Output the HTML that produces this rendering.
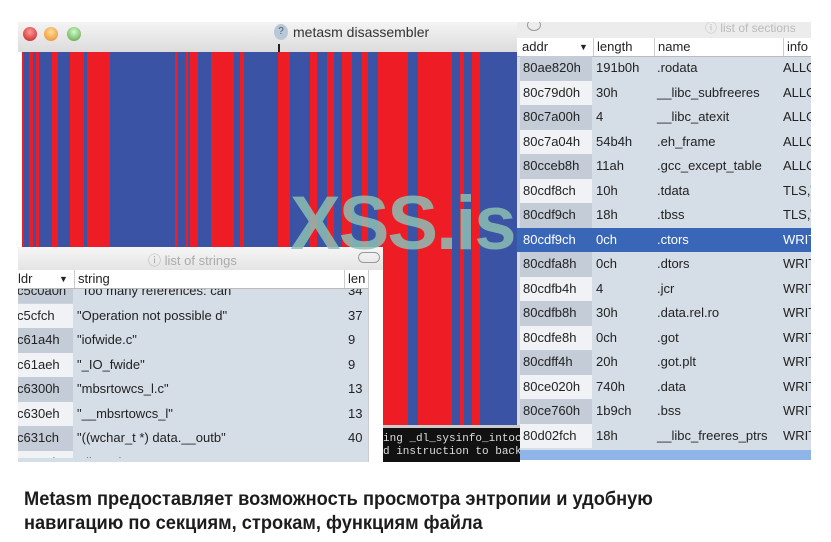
<!DOCTYPE html>
<html><head><meta charset="utf-8"><style>
*{margin:0;padding:0;box-sizing:border-box}
body{width:831px;height:542px;background:#fff;position:relative;overflow:hidden;font-family:"Liberation Sans","DejaVu Sans",sans-serif}
.abs{position:absolute}
#mtitle{left:18px;top:22px;width:502px;height:30px;background:linear-gradient(#f4f4f4,#dcdcdc);}
.dot{position:absolute;top:27px;width:14px;height:14px;border-radius:50%}
#ent{left:22px;top:52px;width:498px;height:410px;
background:linear-gradient(90deg,
#ee1c25 0,#ee1c25 2px,#3a53a4 2px,#3a53a4 7px,#ee1c25 7px,#ee1c25 11px,#3a53a4 11px,#3a53a4 14px,#ee1c25 14px,#ee1c25 17px,#3a53a4 17px,#3a53a4 30px,#ee1c25 30px,#ee1c25 36px,#3a53a4 36px,#3a53a4 48px,
#ee1c25 48px,#ee1c25 62px,#3a53a4 62px,#3a53a4 65px,#ee1c25 65px,#ee1c25 88px,#3a53a4 88px,#3a53a4 153px,
#ee1c25 153px,#ee1c25 156px,#3a53a4 156px,#3a53a4 164px,#ee1c25 164px,#ee1c25 166px,#3a53a4 166px,#3a53a4 168px,#ee1c25 168px,#ee1c25 176px,#3a53a4 176px,#3a53a4 189px,
#ee1c25 189px,#ee1c25 212px,#3a53a4 212px,#3a53a4 218px,#ee1c25 218px,#ee1c25 222px,#3a53a4 222px,#3a53a4 256px,
#ee1c25 256px,#ee1c25 268px,#3a53a4 268px,#3a53a4 288px,#ee1c25 288px,#ee1c25 295px,#3a53a4 295px,#3a53a4 305px,#ee1c25 305px,#ee1c25 312px,#3a53a4 312px,#3a53a4 320px,
#ee1c25 320px,#ee1c25 330px,#3a53a4 330px,#3a53a4 340px,#ee1c25 340px,#ee1c25 346px,#3a53a4 346px,#3a53a4 356px,
#ee1c25 356px,#ee1c25 386px,#3a53a4 386px,#3a53a4 396px,#ee1c25 396px,#ee1c25 430px,#3a53a4 430px,#3a53a4 438px,#ee1c25 438px,#ee1c25 442px,#3a53a4 442px,#3a53a4 450px,#ee1c25 450px,#ee1c25 458px,#3a53a4 458px,#3a53a4 498px)}
#wm{left:290px;top:186px;font-size:76px;font-weight:bold;color:rgba(140,190,180,0.85);letter-spacing:-2px;line-height:1}
#sec{left:517px;top:22px;width:294px;height:438px;background:#d5dde6}
#sectitle{left:517px;top:22px;width:294px;height:16px;background:#ececec;color:#bbb;font-size:12px;overflow:hidden}
.hdr{background:#fff;border-bottom:1px solid #bbb;font-size:13px;color:#222;height:19px;line-height:18px}
.row{position:absolute;height:24.5px;line-height:24.5px;font-size:13px;color:#222;white-space:nowrap}
.row span{position:absolute;top:0}
.sel{background:#3a66b8;color:#fff}
#str{left:18px;top:247px;width:365px;height:215px;background:#d5dde6}
#term{left:383px;top:425px;width:137px;height:37px;background:#111;color:#ddd;font-family:"Liberation Mono",monospace;font-size:11px;line-height:13px;padding-top:5px;border-top:3px solid #ccc;white-space:nowrap;overflow:hidden}
#cap{left:24px;top:488px;font-size:19px;font-weight:bold;color:#1c1c1c;line-height:24px;transform:scaleX(0.96);transform-origin:0 0;white-space:nowrap}
</style></head><body>
<div id="mtitle" class="abs"></div>
<div class="dot" style="left:23px;background:radial-gradient(circle at 50% 35%,#f99,#c21a1a)"></div>
<div class="dot" style="left:44px;background:radial-gradient(circle at 50% 35%,#fd9,#e8891e)"></div>
<div class="dot" style="left:67px;background:radial-gradient(circle at 50% 35%,#cfc,#5a9a3a)"></div>
<div class="abs" style="left:274px;top:24px;width:14px;height:16px;border-radius:50%;background:#b8c8d8;color:#557;font-size:10px;text-align:center;line-height:16px">?</div>
<div class="abs" style="left:293px;top:24px;font-size:14px;color:#333">metasm disassembler</div>
<div class="abs" style="left:278px;top:44px;width:2px;height:8px;background:#222"></div>
<div id="ent" class="abs"></div>

<div id="sec" class="abs"></div>
<div id="sectitle" class="abs"><span style="position:absolute;left:10px;top:-3px;width:14px;height:12px;border:1.5px solid #999;border-radius:50%"></span><span style="position:absolute;left:188px;top:-3px;white-space:nowrap">&#9432; list of sections</span></div>
<div class="abs hdr" style="left:517px;top:38px;width:294px">
<span style="position:absolute;left:5px">addr</span><span style="position:absolute;left:62px;font-size:9px">▼</span>
<span style="position:absolute;left:76px;border-left:1px solid #ccc;padding-left:3px">length</span>
<span style="position:absolute;left:137px;border-left:1px solid #ccc;padding-left:3px">name</span>
<span style="position:absolute;left:266px;border-left:1px solid #ccc;padding-left:3px">info</span></div>
<div id="secrows"></div>

<div id="str" class="abs"></div>
<div class="abs" style="left:18px;top:247px;width:365px;height:23px;background:linear-gradient(#f6f6f6,#e4e4e4)"><span style="position:absolute;left:130px;top:3px;color:#aaa;font-size:13px">&#9432; list of strings</span><span style="position:absolute;left:340px;top:5px;width:22px;height:11px;border:1.5px solid #999;border-radius:6px"></span></div>
<div class="abs hdr" style="left:18px;top:270px;width:350px"><span style="position:absolute;left:0">ldr</span><span style="position:absolute;left:41px;font-size:9px">▼</span><span style="position:absolute;left:56px;border-left:1px solid #ccc;padding-left:3px">string</span><span style="position:absolute;left:326px;border-left:1px solid #ccc;padding-left:3px">len</span></div>
<div class="abs" style="left:368px;top:270px;width:15px;height:192px;background:#fff;border-left:1px solid #ccc"></div>
<div id="strrows"></div>

<div id="term" class="abs">ing _dl_sysinfo_intoc<br>d instruction to back</div>
<div class="abs" style="left:520px;top:450px;width:291px;height:10px;background:#8fb4e8"></div>
<div id="wm" class="abs">XSS.is</div>

<div id="cap" class="abs">Metasm предоставляет возможность просмотра энтропии и удобную<br>навигацию по секциям, строкам, функциям файла</div>

<script>
var s=[["80ae820h","191b0h",".rodata","ALLO"],["80c79d0h","30h","__libc_subfreeres","ALLO"],["80c7a00h","4","__libc_atexit","ALLO"],["80c7a04h","54b4h",".eh_frame","ALLO"],["80cceb8h","11ah",".gcc_except_table","ALLO"],["80cdf8ch","10h",".tdata","TLS,W"],["80cdf9ch","18h",".tbss","TLS,W"],["80cdf9ch","0ch",".ctors","WRIT"],["80cdfa8h","0ch",".dtors","WRIT"],["80cdfb4h","4",".jcr","WRIT"],["80cdfb8h","30h",".data.rel.ro","WRIT"],["80cdfe8h","0ch",".got","WRIT"],["80cdff4h","20h",".got.plt","WRIT"],["80ce020h","740h",".data","WRIT"],["80ce760h","1b9ch",".bss","WRIT"],["80d02fch","18h","__libc_freeres_ptrs","WRIT"]];
var h="";
s.forEach(function(r,i){var y=56+i*24.5;var sel=i==7;
var bg=sel?"#3a66b8":(i%2==0?"#c3ccd7":"#f0f2f5");
h+='<div class="row'+(sel?' sel':'')+'" style="left:517px;top:'+y+'px;width:294px;overflow:hidden"><span style="left:3px;width:72px;height:24.5px;background:'+bg+';padding-left:3px">'+r[0]+'</span><span style="left:79px">'+r[1]+'</span><span style="left:140px">'+r[2]+'</span><span style="left:266px">'+r[3]+'</span></div>';});
document.getElementById('secrows').innerHTML=h;
var t=[["c5c0a0h","\"Too many references: can","34"],["c5cfch","\"Operation not possible d\"","37"],["c61a4h","\"iofwide.c\"","9"],["c61aeh","\"_IO_fwide\"","9"],["c6300h","\"mbsrtowcs_l.c\"","13"],["c630eh","\"__mbsrtowcs_l\"","13"],["c631ch","\"((wchar_t *) data.__outb\"","40"],["c6334h","\"dl-runtime.c\"","19"]];
h="";
t.forEach(function(r,i){var y=279+i*24.5;var bg=i%2==0?"#c3ccd7":"#f0f2f5";
h+='<div class="row" style="left:18px;top:'+y+'px;width:350px;overflow:hidden'+(i==0?';clip-path:inset(10px 0 0 0)':'')+(i==7?';clip-path:inset(0 0 17px 0)':'')+'"><span style="left:0;width:55px;height:24.5px;background:'+bg+';text-indent:-1px;overflow:hidden">'+r[0]+'</span><span style="left:59px">'+r[1]+'</span><span style="left:330px">'+r[2]+'</span></div>';});
document.getElementById('strrows').innerHTML=h;
</script>
</body></html>
